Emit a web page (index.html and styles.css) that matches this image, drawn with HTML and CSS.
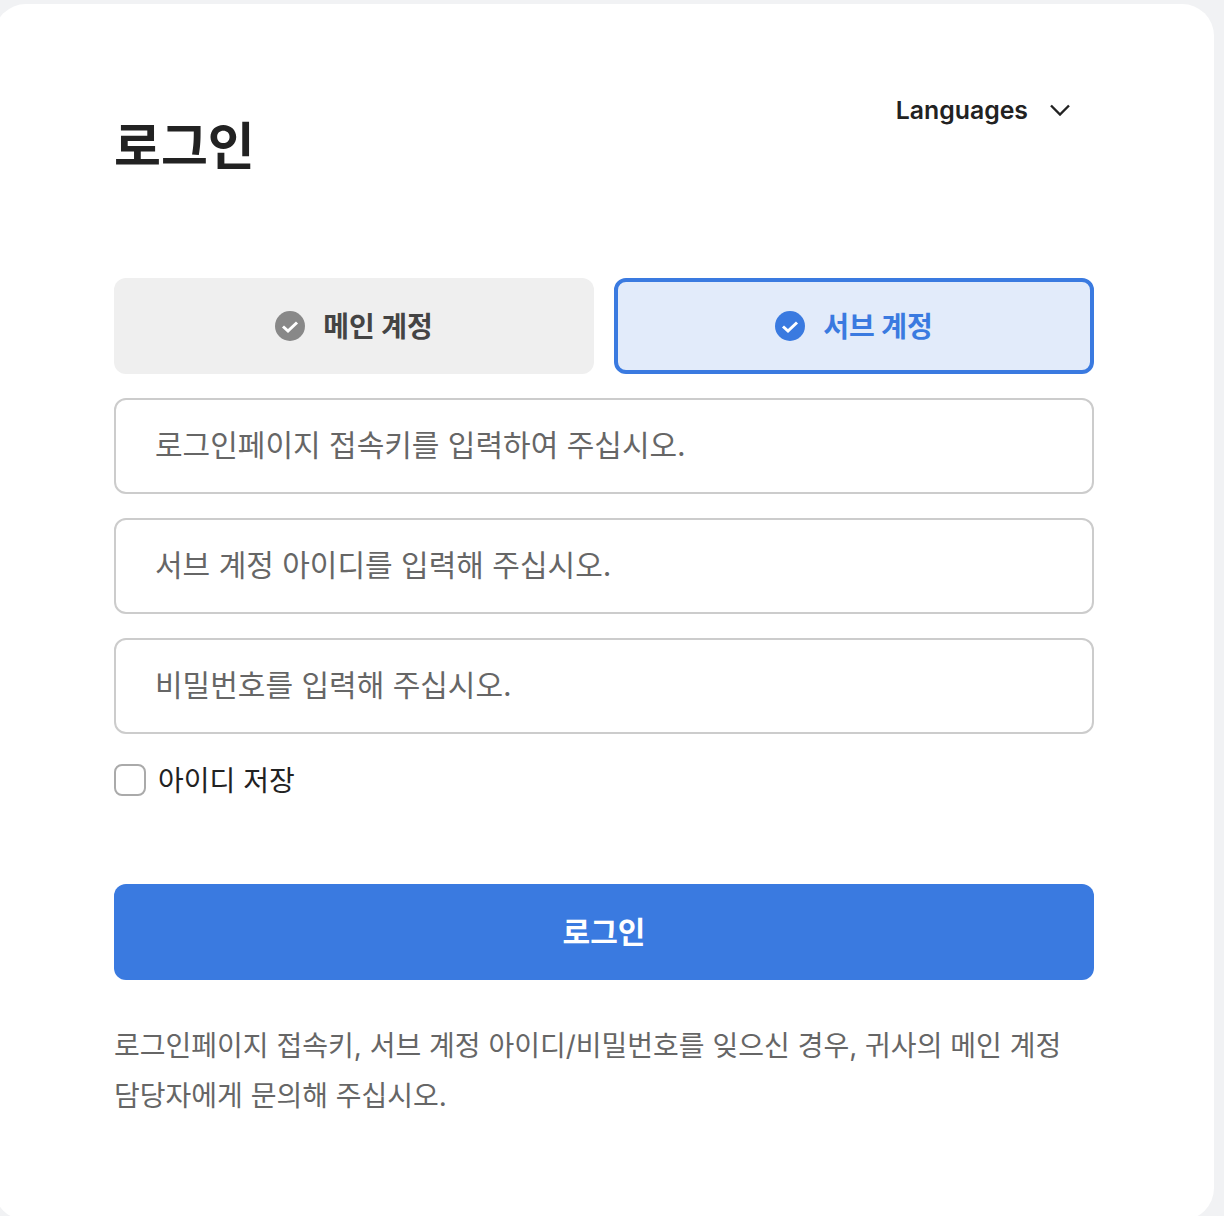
FILE: index.html
```html
<!DOCTYPE html>
<html lang="ko">
<head>
<meta charset="utf-8">
<title>로그인</title>
<link rel="stylesheet" href="styles.css">
</head>
<body>
<main class="card">
  <header class="head">
    <h1 class="title">로그인</h1>
    <button class="lang" type="button">
      <span>Languages</span>
      <svg class="chev" width="20" height="12" viewBox="0 0 20 12"><path d="M1 1.5l9 9 9-9" fill="none" stroke="#222" stroke-width="2.4"/></svg>
    </button>
  </header>
  <form class="form">
    <div class="tabs">
      <button class="tab" type="button">
        <svg class="tick" width="30" height="30" viewBox="0 0 30 30"><circle cx="15" cy="15" r="15" fill="#888"/><path d="M8 15.5l5 4.5 9-8.5" fill="none" stroke="#fff" stroke-width="3"/></svg>
        <span class="tab-label">메인 계정</span>
      </button>
      <button class="tab tab-on" type="button">
        <svg class="tick" width="30" height="30" viewBox="0 0 30 30"><circle cx="15" cy="15" r="15" fill="#3a7ae0"/><path d="M8 15.5l5 4.5 9-8.5" fill="none" stroke="#fff" stroke-width="3"/></svg>
        <span class="tab-label">서브 계정</span>
      </button>
    </div>
    <input class="field" type="text" placeholder="로그인페이지 접속키를 입력하여 주십시오.">
    <input class="field" type="text" placeholder="서브 계정 아이디를 입력해 주십시오.">
    <input class="field" type="password" placeholder="비밀번호를 입력해 주십시오.">
    <label class="remember"><span class="box"></span><span class="remember-label">아이디 저장</span></label>
    <button class="submit" type="button">로그인</button>
  </form>
  <p class="note">로그인페이지 접속키, 서브 계정 아이디/비밀번호를 잊으신 경우, 귀사의 메인 계정 담당자에게 문의해 주십시오.</p>
</main>
</body>
</html>
```
FILE: styles.css
```css
* { box-sizing: border-box; }
html, body { margin: 0; height: 1216px; overflow: hidden; }
body {
  background: #f1f2f4;
  padding-top: 4px;
  font-family: Inter, "Noto Sans CJK KR", sans-serif;
  color: #222;
}
button, input { font-family: inherit; }
.card {
  margin-left: -6px;
  width: 1220px;
  height: 1216px;
  background: #fff;
  border-radius: 32px;
  padding: 86px 120px 0;
}
.head { display: flex; justify-content: space-between; align-items: flex-start; height: 188px; }
.title { margin: 0; padding-top: 25px; font-size: 51px; line-height: 64px; font-weight: 700; color: #222; }
.lang {
  display: flex; align-items: center; gap: 22px;
  border: 0; background: none; padding: 0 24px 0 0;
  height: 40px;
  font-size: 24.8px; font-weight: 600; color: #222;
}
.form { display: flex; flex-direction: column; gap: 24px; }
.tabs { display: grid; grid-template-columns: 1fr 1fr; gap: 20px; }
.tab {
  display: flex; align-items: center; justify-content: center; gap: 18px;
  height: 96px;
  border: 0; border-radius: 12px;
  background: #efefef;
  font-size: 28px; font-weight: 700; color: #444;
}
.tab-label { padding-bottom: 2px; }
.tab-on { background: #e2ebfa; border: 4px solid #3a7ae0; color: #3a7ae0; }
.field {
  height: 96px;
  border: 2px solid #ccc; border-radius: 12px;
  padding: 0 39px 2px;
  font-size: 30px; color: #222; background: #fff;
  outline: 0;
}
.field::placeholder { color: #666; opacity: 1; }
.remember { display: flex; align-items: center; gap: 12px; height: 40px; margin-top: 2px; font-size: 28px; color: #222; }
.remember-label { padding-bottom: 2px; }
.box { width: 32px; height: 32px; border: 2px solid #aaa; border-radius: 8px; background: #fff; }
.submit {
  margin-top: 60px;
  height: 96px;
  border: 0; border-radius: 12px;
  background: #3a7ae0;
  padding: 0 0 4px;
  font-size: 30px; font-weight: 700; color: #fff;
}
.note { margin: 41px 0 0; font-size: 28px; line-height: 50px; color: #666; }
```
